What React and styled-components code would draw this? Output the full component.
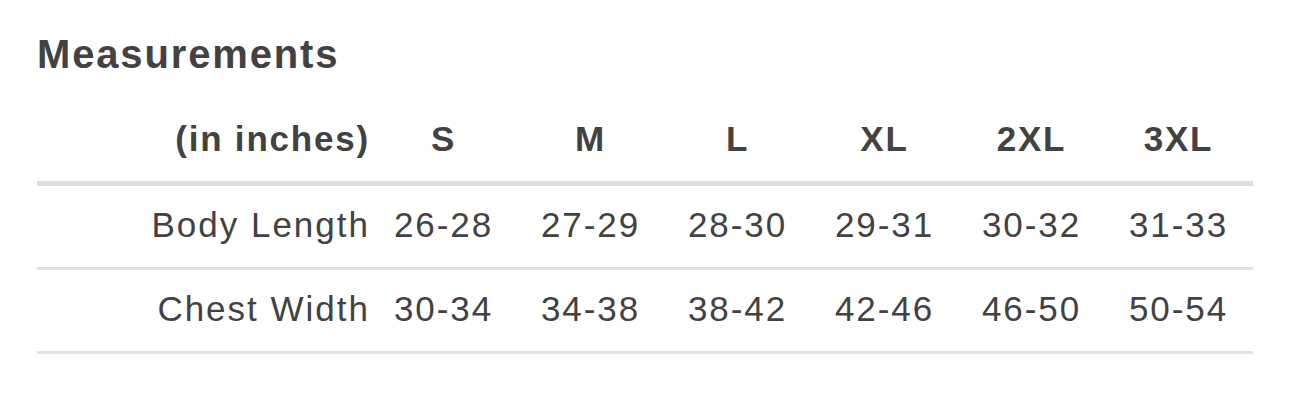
import React from "react";
import styled, { createGlobalStyle } from "styled-components";

const Global = createGlobalStyle`
  html, body { margin: 0; padding: 0; background: #ffffff; }
  body { font-family: "Liberation Sans", Arial, Helvetica, sans-serif; color: #424242; }
`;

const Page = styled.div`
  padding: 31px 0 0 37px;
  width: 1216px;
`;

const Title = styled.h2`
  margin: 0 0 23px 0;
  font-size: 40px;
  line-height: 46px;
  font-weight: 700;
  letter-spacing: 1.85px;
  color: #424242;
`;

const Table = styled.div`
  display: flex;
  flex-direction: column;
  width: 1216px;
`;

const Row = styled.div`
  display: grid;
  grid-template-columns: 333px repeat(6, 147px);
  align-items: center;
  box-sizing: content-box;
  height: 78px;
  padding-bottom: 3px;
  border-bottom: ${(p) => (p.$head ? "5px" : "3px")} solid ${(p) => (p.$head ? "#dcdce1" : "#e1e1e5")};
`;

const Label = styled.div`
  text-align: right;
  font-size: 35px;
  line-height: 40px;
  letter-spacing: ${(p) => (p.$head ? "1.8px" : "2px")};
  font-weight: ${(p) => (p.$head ? 700 : 400)};
  color: #424242;
`;

const Cell = styled.div`
  text-align: center;
  font-size: 35px;
  line-height: 40px;
  letter-spacing: ${(p) => (p.$head ? "1.8px" : "1.9px")};
  font-weight: ${(p) => (p.$head ? 700 : 400)};
  color: #424242;
`;

const sizes = ["S", "M", "L", "XL", "2XL", "3XL"];
const rows = [
  { label: "Body Length", values: ["26-28", "27-29", "28-30", "29-31", "30-32", "31-33"] },
  { label: "Chest Width", values: ["30-34", "34-38", "38-42", "42-46", "46-50", "50-54"] },
];

export default function App() {
  return (
    <>
      <Global />
      <Page>
        <Title>Measurements</Title>
        <Table>
          <Row $head>
            <Label $head>(in inches)</Label>
            {sizes.map((s) => (
              <Cell $head key={s}>{s}</Cell>
            ))}
          </Row>
          {rows.map((r) => (
            <Row key={r.label}>
              <Label>{r.label}</Label>
              {r.values.map((v, i) => (
                <Cell key={i}>{v}</Cell>
              ))}
            </Row>
          ))}
        </Table>
      </Page>
    </>
  );
}
